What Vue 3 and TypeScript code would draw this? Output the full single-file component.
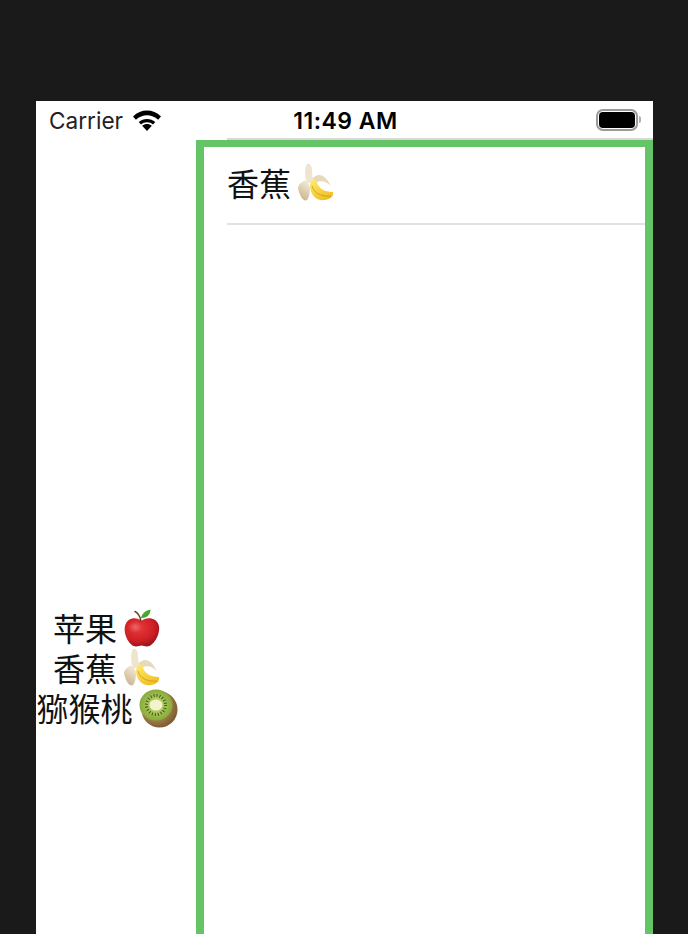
<script setup lang="ts">
interface Fruit {
  name: string
  icon: string
}
const fruits: Fruit[] = [
  { name: '苹果', icon: 'apple' },
  { name: '香蕉', icon: 'banana' },
  { name: '猕猴桃', icon: 'kiwi' },
]
const selected = fruits[1]
</script>

<template>
  <div class="page">
    <svg class="defs" aria-hidden="true">
      <defs>
        <radialGradient id="apple-red" cx="0.4" cy="0.35" r="0.75">
          <stop offset="0" stop-color="#e8393a" />
          <stop offset="0.6" stop-color="#cf1f26" />
          <stop offset="1" stop-color="#86101a" />
        </radialGradient>
        <linearGradient id="banana-yellow" x1="0.2" y1="0" x2="0.7" y2="1">
          <stop offset="0" stop-color="#fde96a" />
          <stop offset="1" stop-color="#f0bd22" />
        </linearGradient>
        <linearGradient id="banana-peel" x1="0.7" y1="0" x2="0.3" y2="1">
          <stop offset="0" stop-color="#f4ecd9" />
          <stop offset="1" stop-color="#c8b28c" />
        </linearGradient>
        <radialGradient id="kiwi-skin" cx="0.4" cy="0.4" r="0.7">
          <stop offset="0.6" stop-color="#9b7a45" />
          <stop offset="1" stop-color="#6d4e2a" />
        </radialGradient>
        <radialGradient id="kiwi-flesh" cx="0.5" cy="0.5" r="0.5">
          <stop offset="0.3" stop-color="#b4d062" />
          <stop offset="1" stop-color="#86aa3a" />
        </radialGradient>
        <radialGradient id="apple-shine" cx="0.5" cy="0.5" r="0.5">
          <stop offset="0" stop-color="#ffffff" stop-opacity="0.25" />
          <stop offset="1" stop-color="#ffffff" stop-opacity="0" />
        </radialGradient>
      </defs>
      <symbol id="apple" viewBox="0 0 36 38">
        <path d="M17.5 12 C13 7.500 3 8 1 17 C-1 26 6 37.500 12 37.500 C14.500 37.500 16 36.500 17.500 36.500 C19 36.500 21 37.500 23 37.500 C29 37.500 36.500 26 35 17 C33 8 22 7.500 17.500 12 Z" fill="url(#apple-red)" />
        <ellipse cx="11" cy="18" rx="7" ry="6" fill="url(#apple-shine)" />
        <path d="M11 2.500 C14 4 16 7 17 12" fill="none" stroke="#6b3a1e" stroke-width="1.400" stroke-linecap="round" />
        <path d="M17 9 C18 4 22 1.500 26.500 0.500 C26.500 5.500 23 9.500 17 9 Z" fill="#4aa52e" />
      </symbol>
      <symbol id="banana" viewBox="0 0 36 40">
        <path d="M14 16 C20 9 27 11 33 23 C28 18 22 17 17 20 Z" fill="#e6d9bc" />
        <path d="M9 1 C12 0 14 3 14 8 L15 20 L9 20 C7 14 6 6 9 1 Z" fill="#efe4cd" />
        <path d="M9 17 C4 18 0 22 0 25 C1 31 4 37.500 8 37.500 C11 36.500 12 30 12 24 Z" fill="url(#banana-peel)" />
        <path d="M12 22 C14 16 18 15 19 19 C20 25 26 29 35 29 C36 33 33 36 27 37 C19 38 12 33 12 22 Z" fill="url(#banana-yellow)" />
        <path d="M14 23 C16 30 23 34 33 33" fill="none" stroke="#c98f0a" stroke-width="0.700" />
      </symbol>
      <symbol id="kiwi" viewBox="0 0 39 39">
        <circle cx="20.500" cy="20.500" r="18" fill="url(#kiwi-skin)" />
        <ellipse cx="17" cy="16" rx="16.500" ry="15.500" fill="url(#kiwi-flesh)" />
        <circle cx="17" cy="16" r="9.500" fill="none" stroke="#3f5424" stroke-width="3" stroke-dasharray="1 2" />
        <ellipse cx="17" cy="16" rx="6.500" ry="5.500" fill="#f2f2cf" />
      </symbol>
    </svg>

    <div class="phone">
      <div class="status">
        <div class="status-left">
          <span class="carrier">Carrier</span>
          <svg class="wifi" viewBox="0 0 28 21">
            <path d="M14 21 L9.200 15.700 C12 13.300 16 13.300 18.800 15.700 Z" fill="#000" />
            <path d="M5.700 11.900 C10.400 7.900 17.600 7.900 22.300 11.900 L20 14.400 C16.500 11.500 11.500 11.500 8 14.400 Z" fill="#000" />
            <path d="M0 6.500 C8 -1.400 20 -1.400 28 6.500 L25.100 9.700 C18.800 3.700 9.200 3.700 2.900 9.700 Z" fill="#000" />
          </svg>
        </div>
        <span class="time">11:49 AM</span>
        <div class="battery">
          <div class="battery-body"><div class="battery-fill"></div></div>
          <div class="battery-nub"></div>
        </div>
      </div>
      <div class="hairline"></div>
      <div class="main">
        <div class="list">
          <div v-for="fruit in fruits" :key="fruit.name" class="fruit">
            <span>{{ fruit.name }}</span>
            <svg class="emoji" :class="fruit.icon"><use :href="'#' + fruit.icon" /></svg>
          </div>
        </div>
        <div class="detail">
          <div class="row">
            <div class="fruit">
              <span>{{ selected.name }}</span>
              <svg class="emoji" :class="selected.icon"><use :href="'#' + selected.icon" /></svg>
            </div>
          </div>
        </div>
      </div>
    </div>
  </div>
</template>

<style>
html,
body {
  margin: 0;
  background: #1a1a1a;
}
</style>

<style scoped>
.page {
  position: relative;
  box-sizing: border-box;
  height: 934px;
  overflow: hidden;
  padding: 101px 35px 0 36px;
  background: #1a1a1a;
  font-family: "Noto Sans CJK SC", "Liberation Sans", sans-serif;
  color: #111;
}
.defs {
  position: absolute;
  width: 0;
  height: 0;
}
.phone {
  background: #fff;
  height: 1096px;
  display: flex;
  flex-direction: column;
}
.status {
  box-sizing: border-box;
  height: 37px;
  flex: none;
  display: grid;
  grid-template-columns: 1fr auto 1fr;
  align-items: center;
  padding: 2px 11px 0 13px;
  font-family: Inter, "Liberation Sans", sans-serif;
  font-size: 22.6px;
  color: #000;
}
.status-left {
  display: flex;
  align-items: center;
  gap: 10px;
}
.carrier {
  font-weight: 400;
  color: #222;
}
.wifi {
  width: 28px;
  height: 21px;
}
.time {
  font-size: 23px;
  font-weight: 600;
  letter-spacing: 0.5px;
}
.battery {
  justify-self: end;
  display: flex;
  align-items: center;
  gap: 1px;
  margin-right: 1px;
  margin-top: -2px;
}
.battery-body {
  box-sizing: border-box;
  width: 42px;
  height: 22px;
  border: 2px solid #9a9a9a;
  border-radius: 7px;
  padding: 1px;
  background: #fff;
}
.battery-fill {
  height: 100%;
  background: #000;
  border-radius: 4px;
}
.battery-nub {
  width: 2px;
  height: 7px;
  background: #b0b0b0;
  border-radius: 0 2px 2px 0;
}
.hairline {
  flex: none;
  height: 2px;
  margin-left: 191px;
  background: #d8d8d8;
}
.main {
  flex: 1;
  display: flex;
  min-height: 0;
}
.list {
  flex: none;
  width: 142px;
  margin-right: 18px;
  height: 1054px;
  display: flex;
  flex-direction: column;
  justify-content: center;
  align-items: center;
}
.fruit {
  height: 40px;
  display: flex;
  align-items: center;
  gap: 6px;
  font-size: 32px;
  line-height: 40px;
  white-space: nowrap;
}
.emoji {
  flex: none;
  width: 38px;
  height: 38px;
  margin-top: 2px;
}
.emoji.banana {
  height: 40px;
}
.emoji.kiwi {
  width: 39px;
  height: 39px;
}
.detail {
  flex: 1;
  min-width: 0;
  border: 8px solid #65c466;
  border-top-width: 7px;
  border-bottom: 0;
  padding-left: 23px;
}
.row {
  box-sizing: border-box;
  height: 78px;
  padding-top: 15px;
  border-bottom: 2px solid #e2e2e2;
}
</style>
